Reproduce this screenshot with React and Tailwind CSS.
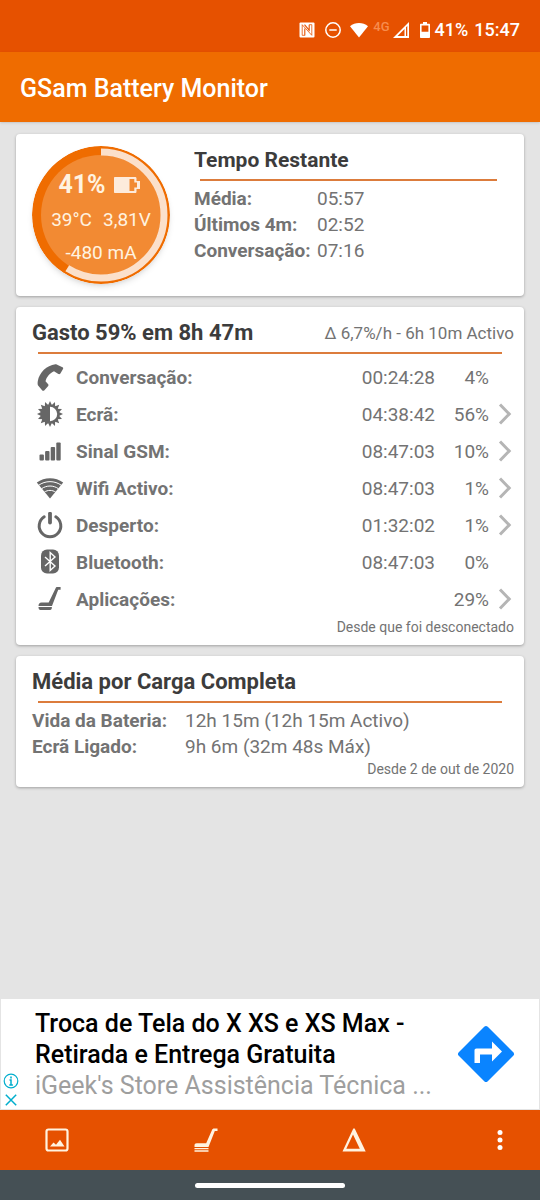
import React from "react";

const usage = [
  { icon: PhoneIcon, label: "Conversação:", time: "00:24:28", percent: "4%", more: false },
  { icon: BrightnessIcon, label: "Ecrã:", time: "04:38:42", percent: "56%", more: true },
  { icon: SignalIcon, label: "Sinal GSM:", time: "08:47:03", percent: "10%", more: true },
  { icon: WifiIcon, label: "Wifi Activo:", time: "08:47:03", percent: "1%", more: true },
  { icon: PowerIcon, label: "Desperto:", time: "01:32:02", percent: "1%", more: true },
  { icon: BluetoothIcon, label: "Bluetooth:", time: "08:47:03", percent: "0%", more: false },
  { icon: BroomIcon, label: "Aplicações:", time: "", percent: "29%", more: true },
];

/* ================= ROW ICONS ================= */
function PhoneIcon() {
  return (
    <svg viewBox="0 0 28 28" className="w-7 h-7" fill="#666">
      <path d="M1.800 17C3.500 8.500 10.500 1.500 19.400.3c1-.1 1.700.1 2.300.6l4.800 2.300c.7.400.9 1.100.5 1.800l-2.600 4.400c-.5.700-1.200.9-2 .6l-4.400-2.700c-4 1.700-7.500 5.700-8.500 10l2.700 2.900c.4.500.4 1.200 0 1.700l-4 4.500c-.6.600-1.400.6-1.900 0l-4-4.600c-.8-1-.8-2.800-.5-4.800z" />
    </svg>
  );
}

function BrightnessIcon() {
  const spikes = Array.from({ length: 16 }, (_, i) => i * 22.5);
  return (
    <svg viewBox="0 0 28 28" className="w-7 h-7" fill="#666">
      {spikes.map((angle) => (
        <path key={angle} d="M14 0l2.400 5.200h-4.800z" transform={`rotate(${angle} 14 13)`} />
      ))}
      <circle cx="14" cy="13" r="9.600" />
      <path d="M14 5.800a7.200 7.200 0 0 1 0 14.400z" fill="#fff" />
    </svg>
  );
}

function SignalIcon() {
  return (
    <svg viewBox="0 0 28 28" className="w-7 h-7" fill="#666">
      <rect x="3.500" y="16.500" width="4.400" height="6" rx="1" />
      <rect x="9.100" y="13" width="4.400" height="9.500" rx="1" />
      <rect x="14.700" y="9" width="4.400" height="13.500" rx="1" />
      <rect x="20.300" y="4.500" width="4.400" height="18" rx="1" />
    </svg>
  );
}

function WifiIcon() {
  return (
    <svg viewBox="0 0 28 28" className="w-7 h-7" fill="#666">
      <path d="M14 23.500L.8 7.600C8.400 1.800 19.600 1.800 27.200 7.600z" />
      <g fill="none" stroke="#fff" strokeWidth="1">
        <path d="M2.500 10.400c6.600-5 16.400-5 23 0" />
        <path d="M5.500 13.800c4.900-3.700 12.100-3.700 17 0" />
        <path d="M8.300 17.200c3.300-2.400 8.100-2.400 11.400 0" />
      </g>
    </svg>
  );
}

function PowerIcon() {
  return (
    <svg viewBox="0 0 28 28" className="w-7 h-7" fill="none" stroke="#666" strokeLinecap="round">
      <path d="M8.200 4.800a10.800 10.800 0 1 0 11.600 0" strokeWidth="3" />
      <path d="M14 1.600v9" strokeWidth="3.800" />
    </svg>
  );
}

function BluetoothIcon() {
  return (
    <svg viewBox="0 0 28 28" className="w-7 h-7">
      <rect x="5" y=".5" width="18" height="24" rx="6" fill="#666" />
      <path d="M9 8l10 9-4.800 4.500v-18L19 8 9 17" fill="none" stroke="#fff" strokeWidth="1.400" />
    </svg>
  );
}

function BroomIcon() {
  return (
    <svg viewBox="0 0 28 28" className="w-7 h-7" fill="#666">
      <path d="M2.500 20c0-2.200 1-3.500 3-3.500h7.200L19.500 2.400c.4-.9.900-1.300 1.900-1.300h3.200v2.600h-2.400L16 20z" />
      <path d="M2.500 21h13.400c0 2-.6 3-1.900 3H4.400c-1.300 0-1.900-1-1.900-3z" />
    </svg>
  );
}

function Chevron() {
  return (
    <svg viewBox="0 0 14 24" className="w-3.5 h-6" fill="none" stroke="#b5b5b5" strokeWidth="3">
      <path d="M2 1.500l9.200 9.500L2 20.500" />
    </svg>
  );
}

/* ================= STATUS BAR ================= */
function StatusBar() {
  return (
    <div className="h-[52px] pt-2 pr-5 bg-[#e65100] flex items-center justify-end text-white text-[18px] leading-6 font-medium">
      <svg viewBox="0 0 16 16" className="w-4 h-4">
        <rect x=".5" y=".5" width="15" height="15" rx="1" fill="#fff" />
        <path d="M5.800 13.300H3.200V2.700L12.800 13.300M10.200 2.700h2.600v10.600" fill="none" stroke="#e65100" strokeWidth=".8" />
        <path d="M5.800 13.500V6.500M10.200 2.700v6.500M5.500 2.700l5 6" fill="none" stroke="#e65100" strokeWidth="1.100" />
      </svg>
      <svg viewBox="0 0 16 16" className="w-4 h-4 ml-[10px]" fill="none" stroke="#fff">
        <circle cx="8" cy="8" r="7.200" strokeWidth="1.500" />
        <path d="M4.300 8h7.400" strokeWidth="1.500" />
      </svg>
      <svg viewBox="0 0 18 16" className="w-[18px] h-4 ml-[9px]" fill="#fff">
        <path d="M9 15.500L0 4.300C5 0 13 0 18 4.300z" />
      </svg>
      <span className="ml-[5px] pb-1.5 text-[13px] leading-4 text-[#f78c4d]">4G</span>
      <svg viewBox="0 0 16 16" className="w-4 h-4 ml-[3px]" fill="#fff">
        <path fillRule="evenodd" d="M16 0v16H0zM11.500 7L4.500 14h7zM13 5.300V14h1.300V4z" />
      </svg>
      <svg viewBox="0 0 10 16" className="w-[10px] h-4 ml-[11px]" fill="#fff">
        <path fillRule="evenodd" d="M3 0h4v1.800h2c.6 0 1 .4 1 1V15c0 .6-.4 1-1 1H1c-.6 0-1-.4-1-1V2.800c0-.6.400-1 1-1h2zM1.600 3.500v6.300h6.800V3.500z" />
      </svg>
      <span className="ml-[5px]">41%</span>
      <span className="ml-1.5">15:47</span>
    </div>
  );
}

/* ================= BATTERY GAUGE ================= */
function Gauge() {
  return (
    <div className="relative w-[138px] h-[138px] shrink-0">
      <svg viewBox="0 0 138 138" className="w-full h-full rounded-full shadow-md">
        <circle cx="69" cy="69" r="69" fill="#ef6c00" />
        <circle cx="69" cy="69" r="60" fill="#f28a33" />
        <circle
          cx="69"
          cy="69"
          r="63"
          fill="none"
          stroke="#fbe0cb"
          strokeWidth="7"
          pathLength="100"
          strokeDasharray="59 41"
          transform="rotate(-90 69 69)"
        />
      </svg>
      <div className="absolute inset-0 pt-6 flex flex-col items-center text-[#fff3e0]">
        <div className="flex items-center gap-2 h-[30px] pr-1 text-[25px] font-bold">
          41%
          <svg viewBox="0 0 26 16" className="w-[26px] h-4" fill="#fdebdc">
            <path fillRule="evenodd" d="M1 0h20c1 0 1.500.5 1.500 1.500V4H26v8h-3.500v2.500c0 1-.5 1.500-1.500 1.500H1c-.6 0-1-.4-1-1V1c0-.6.400-1 1-1zM15.500 2v12h4.800v-3.500H23V5.500h-2.700V2z" />
          </svg>
        </div>
        <div className="flex gap-[11px] h-10 items-center text-[19px]">
          <span>39°C</span>
          <span>3,81V</span>
        </div>
        <div className="h-[26px] flex items-center text-[19px]">-480 mA</div>
      </div>
    </div>
  );
}

function Card({ className, children }) {
  return (
    <section className={`bg-white rounded-sm shadow-[0_1px_3px_rgba(0,0,0,0.3)] ${className}`}>
      {children}
    </section>
  );
}

function App() {
  return (
    <div className="min-h-screen flex flex-col bg-[#e4e4e4] font-['Roboto',sans-serif] text-[#737373]">
      <StatusBar />
      <header className="h-[70px] px-5 pt-1 flex items-center bg-[#ef6c00] shadow-sm">
        <h1 className="text-white text-[25px] font-medium">GSam Battery Monitor</h1>
      </header>

      <main className="flex-1 px-4 pt-3 flex flex-col gap-[11px]">
        {/* REMAINING TIME */}
        <Card className="flex gap-6 pl-4 pr-[27px] pt-3 pb-3">
          <Gauge />
          <div className="flex-1">
            <h2 className="text-[21px] leading-7 font-bold text-[#3c3c3c]">Tempo Restante</h2>
            <hr className="mt-[5px] ml-1.5 mb-[5px] border-t-2 border-[#dc7c3c]" />
            <table className="text-[19px] leading-[26px]">
              <tbody>
                <tr>
                  <th scope="row" className="w-[123px] text-left font-bold">Média:</th>
                  <td>05:57</td>
                </tr>
                <tr>
                  <th scope="row" className="text-left font-bold">Últimos 4m:</th>
                  <td>02:52</td>
                </tr>
                <tr>
                  <th scope="row" className="text-left font-bold">Conversação:</th>
                  <td>07:16</td>
                </tr>
              </tbody>
            </table>
          </div>
        </Card>

        {/* USAGE */}
        <Card className="pl-4 pr-[10px] pt-3 pb-[9px]">
          <div className="flex items-center justify-between">
            <h2 className="text-[22px] leading-7 font-bold text-[#3c3c3c]">Gasto 59% em 8h 47m</h2>
            <span className="text-[17px] leading-7">Δ 6,7%/h - 6h 10m Activo</span>
          </div>
          <hr className="mt-[5px] ml-1.5 mr-3 mb-[5px] border-t-2 border-[#dc7c3c]" />
          <table className="w-full text-[19px] leading-6">
            <tbody>
              {usage.map(({ icon: Icon, label, time, percent, more }) => (
                <tr key={label} className="h-[37px]">
                  <td className="w-11 pl-1">
                    <Icon />
                  </td>
                  <th scope="row" className="text-left font-bold">{label}</th>
                  <td className="text-right">{time}</td>
                  <td className="w-[54px] text-right">{percent}</td>
                  <td className="w-[25px] pl-[9px]">
                    {more && (
                      <button type="button" aria-label={label} className="block">
                        <Chevron />
                      </button>
                    )}
                  </td>
                </tr>
              ))}
            </tbody>
          </table>
          <p className="text-right text-[14px] leading-[18px]">Desde que foi desconectado</p>
        </Card>

        {/* AVERAGES */}
        <Card className="pl-4 pr-[10px] pt-3 pb-[9px]">
          <h2 className="text-[22px] leading-7 font-bold text-[#3c3c3c]">Média por Carga Completa</h2>
          <hr className="mt-[5px] ml-1.5 mr-3 mb-[5px] border-t-2 border-[#dc7c3c]" />
          <table className="text-[19px] leading-[26px]">
            <tbody>
              <tr>
                <th scope="row" className="w-[153px] text-left font-bold">Vida da Bateria:</th>
                <td>12h 15m (12h 15m Activo)</td>
              </tr>
              <tr>
                <th scope="row" className="text-left font-bold">Ecrã Ligado:</th>
                <td>9h 6m (32m 48s Máx)</td>
              </tr>
            </tbody>
          </table>
          <p className="text-right text-[14px] leading-[18px]">Desde 2 de out de 2020</p>
        </Card>
      </main>

      {/* AD */}
      <aside className="flex items-center h-[112px] bg-white border border-[#e4e4e4]">
        <div className="w-[34px] self-stretch flex flex-col justify-end gap-[3px] pl-0.5 pb-px">
          <button type="button" aria-label="Info">
            <svg viewBox="0 0 16 16" className="w-4 h-4" fill="none" stroke="#00aecd">
              <circle cx="8" cy="8" r="6.800" strokeWidth="1.200" />
              <path d="M6.500 7H8v4.800M6.300 12h3.600" strokeWidth="1.500" />
              <path d="M7.200 4.500h1.600" strokeWidth="1.800" />
            </svg>
          </button>
          <button type="button" aria-label="Fechar">
            <svg viewBox="0 0 16 16" className="w-4 h-4" fill="none" stroke="#00aecd" strokeWidth="1.500">
              <path d="M2.800 2.800l10.400 10.400M13.200 2.800L2.800 13.200" />
            </svg>
          </button>
        </div>
        <div className="flex-1 min-w-0 text-[25px] leading-[31px]">
          <p className="font-medium text-black">
            Troca de Tela do X XS e XS Max - Retirada e Entrega Gratuita
          </p>
          <p className="text-[#9e9e9e]">iGeek's Store Assistência Técnica ...</p>
        </div>
        <a href="#" aria-label="Abrir" className="ml-4 mr-6">
          <svg viewBox="0 0 58 58" className="w-[58px] h-[58px]">
            <rect x="8.500" y="8.500" width="41" height="41" rx="2.500" transform="rotate(45 29 29)" fill="#0a84ff" />
            <path d="M17.500 38V25.500c0-1.300.7-2 2-2H35V16.500l10 10-10 10v-7H23V38z" fill="#fff" />
          </svg>
        </a>
      </aside>

      {/* TOOLBAR */}
      <nav className="h-[60px] pl-[45px] bg-[#e65100] grid grid-cols-[30%_30%_30%_10%] items-center justify-items-start">
        <button type="button" aria-label="Gráfico">
          <svg viewBox="0 0 24 24" className="w-6 h-6" fill="none" stroke="#fff3e0">
            <rect x="1.500" y="1.500" width="21" height="21" rx="2" strokeWidth="2.200" />
            <path d="M5 18.500l3.500-4 2.500 2.300 4-5 4.500 6.700z" fill="#fff3e0" stroke="none" />
          </svg>
        </button>
        <button type="button" aria-label="Aplicações">
          <svg viewBox="0 0 24 24" className="w-6 h-6" fill="#fff3e0">
            <path d="M.5 19v-1.500c0-1.400.8-2.200 2.300-2.200h9.400L18 2c.5-1 1-1.500 2.200-1.500H23.500V3h-2.700L14.500 19z" />
            <path d="M.5 19.900h14v1.300H.5zM.5 22.300h14v1.500H.5z" />
          </svg>
        </button>
        <button type="button" aria-label="Referência">
          <svg viewBox="0 0 24 24" className="w-6 h-6" fill="#fff3e0">
            <path fillRule="evenodd" d="M11.300.5h1.400L23.700 23.500H.5zM11 6.500L4.300 20.800h13.500z" />
          </svg>
        </button>
        <button type="button" aria-label="Mais opções" className="justify-self-end mr-7">
          <svg viewBox="0 0 24 24" className="w-6 h-6" fill="#fff">
            <circle cx="12" cy="4.500" r="2.500" />
            <circle cx="12" cy="12" r="2.500" />
            <circle cx="12" cy="19.500" r="2.500" />
          </svg>
        </button>
      </nav>
      <div className="h-[30px] bg-[#455055] flex items-center justify-center">
        <div className="w-[150px] h-[5px] rounded-full bg-white" />
      </div>
    </div>
  );
}

export default App;
